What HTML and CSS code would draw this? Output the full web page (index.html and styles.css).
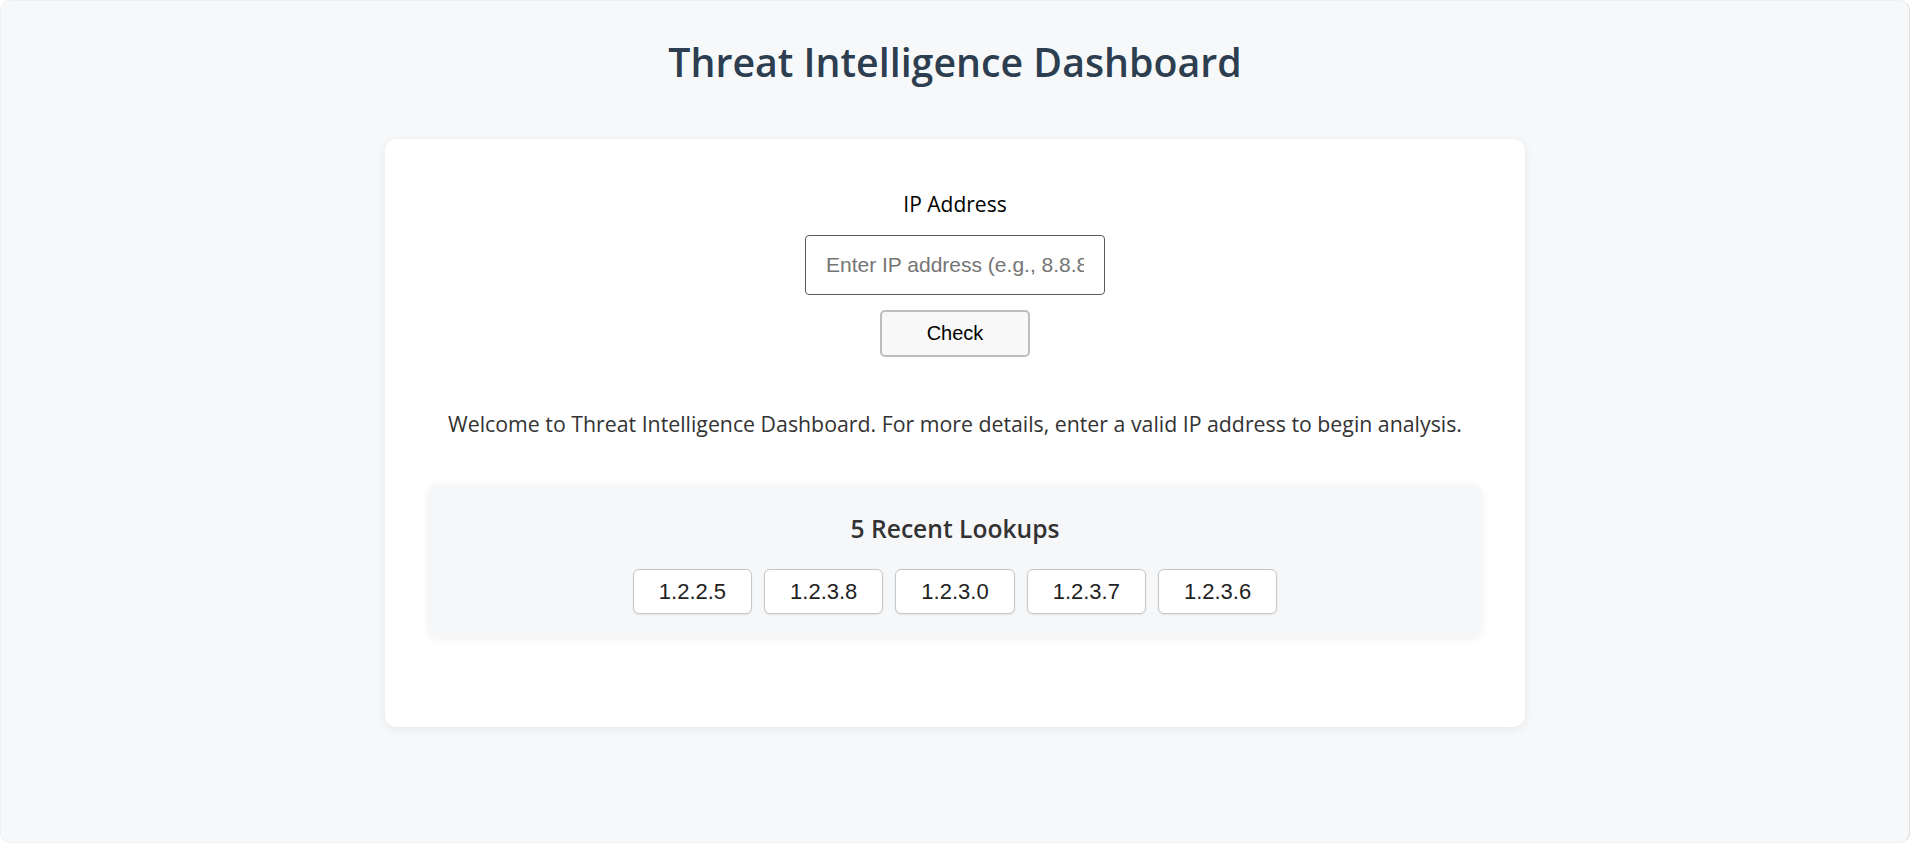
FILE: index.html
```html
<!DOCTYPE html>
<html lang="en">
<head>
<meta charset="utf-8">
<title>Threat Intelligence Dashboard</title>
<link rel="stylesheet" href="styles.css">
</head>
<body>
<div class="app">
  <h1 class="title">Threat Intelligence Dashboard</h1>
  <main class="card">
    <form class="lookup-form">
      <label class="field-label" for="ip">IP Address</label>
      <input class="ip-input" id="ip" type="text" placeholder="Enter IP address (e.g., 8.8.8.8)">
      <button class="check-btn" type="button">Check</button>
    </form>
    <p class="welcome">Welcome to Threat Intelligence Dashboard. For more details, enter a valid IP address to begin analysis.</p>
    <section class="recent">
      <h2 class="recent-title">5 Recent Lookups</h2>
      <div class="chips">
        <button class="chip" type="button">1.2.2.5</button>
        <button class="chip" type="button">1.2.3.8</button>
        <button class="chip" type="button">1.2.3.0</button>
        <button class="chip" type="button">1.2.3.7</button>
        <button class="chip" type="button">1.2.3.6</button>
      </div>
    </section>
  </main>
</div>
</body>
</html>
```

FILE: styles.css
```css
html {
  background: #ffffff;
}

body {
  margin: 0;
  font-family: "Open Sans", "Noto Sans", sans-serif;
}

.app {
  box-sizing: border-box;
  height: 843px;
  background: #f7f8fa;
  border: 1px solid #eef0f2;
  border-right-color: #dcdcdc;
  border-radius: 10px;
  display: flex;
  flex-direction: column;
  align-items: center;
  padding-top: 37px;
}

.title {
  margin: 0 0 53px;
  font-size: 39.3px;
  line-height: 48px;
  font-weight: 600;
  color: #2c3e50;
}

.card {
  box-sizing: border-box;
  width: 1140px;
  background: #ffffff;
  border-radius: 12px;
  box-shadow: 0 2px 10px rgba(0, 0, 0, 0.07);
  padding: 51px 43px 90px;
  display: flex;
  flex-direction: column;
  align-items: center;
}

.lookup-form {
  display: flex;
  flex-direction: column;
  align-items: center;
}

.field-label {
  font-size: 21px;
  line-height: 28px;
  color: #000000;
  margin-bottom: 17px;
}

.ip-input {
  box-sizing: border-box;
  width: 300px;
  height: 60px;
  padding: 0 20px;
  border: 1px solid #5a5a5a;
  border-radius: 4px;
  font-family: "Liberation Sans", Arial, sans-serif;
  font-size: 21px;
  color: #000;
  background: #fff;
  margin: 0 0 15px;
}

.ip-input::placeholder {
  color: #757575;
}

.check-btn {
  box-sizing: border-box;
  width: 150px;
  height: 47px;
  border: 2px solid #bdbdbd;
  border-radius: 5px;
  background: #f8f8f8;
  font-family: "Liberation Sans", Arial, sans-serif;
  font-size: 20px;
  color: #000;
  padding: 0;
}

.welcome {
  margin: 53px 0 46px;
  font-size: 21.3px;
  line-height: 28px;
  color: #333333;
}

.recent {
  box-sizing: border-box;
  width: 100%;
  background: #f6f7f9;
  border-radius: 10px;
  box-shadow: 0 2px 8px rgba(0, 0, 0, 0.06);
  padding: 29px 0 23px;
  display: flex;
  flex-direction: column;
  align-items: center;
}

.recent-title {
  margin: 0 0 24px;
  font-size: 24.6px;
  line-height: 32px;
  font-weight: 600;
  color: #333333;
}

.chips {
  display: flex;
  gap: 12px;
  justify-content: center;
}

.chip {
  box-sizing: border-box;
  height: 45px;
  padding: 0 25px;
  border: 1px solid #c6c6c6;
  border-radius: 6px;
  background: #ffffff;
  box-shadow: 0 1px 2px rgba(0, 0, 0, 0.08);
  font-family: "Liberation Sans", Arial, sans-serif;
  font-size: 22px;
  color: #222222;
}
```
